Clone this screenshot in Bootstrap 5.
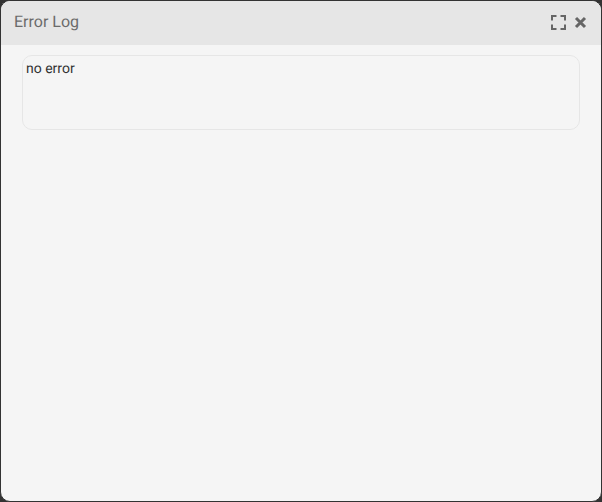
<!doctype html>
<html lang="en">
<head>
<meta charset="utf-8">
<title>Error Log</title>
<link href="https://cdn.jsdelivr.net/npm/bootstrap@5.3.0/dist/css/bootstrap.min.css" rel="stylesheet">
<style>
html, body { height: 100%; }
body { background: #333; font-family: Roboto, sans-serif; overflow: hidden; text-rendering: geometricPrecision; }
.log-window { width: 602px; height: 502px; background: #f5f5f5; border: 1px solid #333; border-radius: 10px; overflow: hidden; }
.log-head { height: 44px; background: #e6e6e6; padding: 0 14px 2px 13px; }
.log-title { font-size: 16px; color: #6b6b6b; line-height: 1; font-weight: 400; margin: 0; }
.log-tools { gap: 8px; }
.log-tools svg { display: block; }
.log-body { padding: 10px 21px 0; }
.log-box { height: 75px; border: 1px solid #e6e6e6; border-radius: 10px; padding: 4px 3px; font-size: 14px; line-height: 18px; color: #333; background: #f5f5f5; }
</style>
</head>
<body>
<div class="log-window d-flex flex-column">
  <div class="log-head d-flex align-items-center justify-content-between">
    <h1 class="log-title">Error Log</h1>
    <div class="log-tools d-flex align-items-center">
      <svg width="15" height="15" viewBox="0 0 15 15" fill="none" stroke="#666" stroke-width="2"><path d="M1 5.5V1H5.5M9.5 1H14V5.5M14 9.5V14H9.5M5.5 14H1V9.5"/></svg>
      <svg width="13" height="13" viewBox="0 0 13 13" fill="none" stroke="#666" stroke-width="3"><path d="M2 2L11 11M11 2L2 11"/></svg>
    </div>
  </div>
  <div class="log-body">
    <div class="log-box">no error</div>
  </div>
</div>
<script src="https://cdn.jsdelivr.net/npm/bootstrap@5.3.0/dist/js/bootstrap.bundle.min.js"></script>
</body>
</html>
